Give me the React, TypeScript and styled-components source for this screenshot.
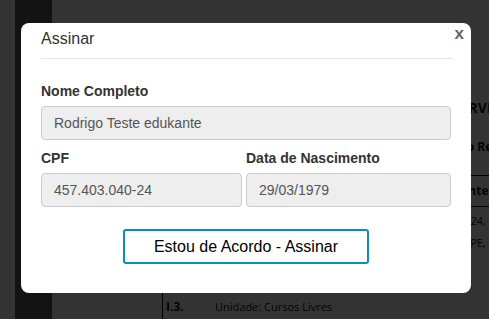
import styled, { createGlobalStyle } from "styled-components";

const GlobalStyle = createGlobalStyle`
  html, body {
    margin: 0;
    padding: 0;
    height: 100%;
    overflow: hidden;
  }
  body {
    background: #fff;
    font-family: "Liberation Sans", Arial, sans-serif;
  }
  #root {
    height: 100%;
  }
`;

// ---- document behind the dialog ----

const Page = styled.div`
  position: relative;
  display: flex;
  height: 100vh;
  background: #fff;
  overflow: hidden;
`;

const Gutter = styled.div`
  width: 15px;
  flex-shrink: 0;
`;

const SideBar = styled.div`
  width: 37px;
  flex-shrink: 0;
  background: #606060;
`;

const Sheet = styled.div`
  flex: 1;
  min-width: 0;
  padding: 98px 0 0 110px;
  font-family: "Open Sans", sans-serif;
  color: #111;
`;

const DocLine = styled.div<{ $indent: number; $bold?: boolean; $size?: number }>`
  padding-left: ${({ $indent }) => $indent}px;
  font-size: ${({ $size }) => $size ?? 11}px;
  font-weight: ${({ $bold }) => ($bold ? 700 : 400)};
  line-height: 20px;
  white-space: nowrap;
`;

const Spacer = styled.div<{ $h: number }>`
  height: ${({ $h }) => $h}px;
`;

const TableHead = styled.div`
  border-top: 1px solid #000;
  border-bottom: 1px solid #000;
  padding: 5px 0;
`;

const TableBody = styled.div`
  padding-top: 3px;
  & > div {
    line-height: 22px;
  }
`;

const Accent = styled.span`
  color: #e8a23a;
  font-weight: 700;
`;

const ItemRow = styled.div`
  display: flex;
  margin-top: 30px;
  padding: 13px 0 10px 3px;
  border-left: 1px solid #000;
  font-size: 11px;
  line-height: 20px;
`;

const ItemNum = styled.span`
  width: 49px;
  font-weight: 700;
  font-size: 12px;
`;

// ---- dialog ----

const Overlay = styled.div`
  position: absolute;
  inset: 0;
  background: rgba(0, 0, 0, 0.8);
`;

const Modal = styled.div`
  position: relative;
  width: 450px;
  margin: 23px 0 0 21px;
  padding-bottom: 29px;
  background: #fff;
  border-radius: 8px;
`;

const Header = styled.div`
  margin: 0 18px 0 20px;
  padding: 6px 0 9px;
  border-bottom: 1px solid #e5e5e5;
`;

const Title = styled.h4`
  margin: 0;
  font-size: 16px;
  font-weight: 400;
  line-height: 20px;
  color: #333;
`;

const Close = styled.button`
  position: absolute;
  top: 2px;
  right: 7px;
  padding: 0;
  border: 0;
  background: none;
  font-family: "Liberation Sans", Arial, sans-serif;
  font-size: 17px;
  font-weight: 700;
  line-height: 17px;
  color: #666;
  cursor: pointer;
`;

const Body = styled.div`
  padding: 22px 20px 0;
`;

const Field = styled.div<{ $gap?: number }>`
  margin-bottom: ${({ $gap }) => $gap ?? 0}px;
`;

const Label = styled.label`
  display: block;
  margin-bottom: 5px;
  font-size: 14px;
  font-weight: 700;
  line-height: 20px;
  color: #333;
`;

const Input = styled.input`
  display: block;
  width: 100%;
  height: 34px;
  box-sizing: border-box;
  padding: 6px 12px;
  font-family: "Liberation Sans", Arial, sans-serif;
  font-size: 14px;
  line-height: 20px;
  color: #555;
  background: #eee;
  border: 1px solid #ccc;
  border-radius: 4px;
  outline: none;
`;

const Row = styled.div`
  display: grid;
  grid-template-columns: 201px 205px;
  gap: 4px;
`;

const Footer = styled.div`
  display: flex;
  justify-content: center;
  margin-top: 22px;
`;

const SignButton = styled.button`
  width: 246px;
  height: 35px;
  padding: 0;
  background: #fff;
  border: 2px solid #0a8cbf;
  border-radius: 3px;
  font-family: "Liberation Sans", Arial, sans-serif;
  font-size: 16px;
  color: #000;
  cursor: pointer;
`;

export default function App() {
  return (
    <>
      <GlobalStyle />
      <Page>
        <Gutter />
        <SideBar />
        <Sheet>
          <DocLine $indent={291} $bold $size={14}>
            SERVIÇOS EDUCACIONAIS
          </DocLine>
          <Spacer $h={19} />
          <DocLine $indent={258} $bold $size={12}>
            Nome do Responsável
          </DocLine>
          <Spacer $h={18} />
          <TableHead>
            <DocLine $indent={253} $bold $size={12}>
              Contratante
            </DocLine>
          </TableHead>
          <TableBody>
            <DocLine $indent={222}>
              Rua das Flores, 124, <Accent>Boa Vista</Accent>
            </DocLine>
            <DocLine $indent={268}>Recife - PE, Brasil</DocLine>
          </TableBody>
          <ItemRow>
            <ItemNum>I.3.</ItemNum>
            <span>Unidade: Cursos Livres</span>
          </ItemRow>
        </Sheet>

        <Overlay>
          <Modal>
            <Header>
              <Title>Assinar</Title>
            </Header>
            <Close type="button">x</Close>
            <Body>
              <Field $gap={8}>
                <Label>Nome Completo</Label>
                <Input readOnly defaultValue="Rodrigo Teste edukante" />
              </Field>
              <Row>
                <Field>
                  <Label>CPF</Label>
                  <Input readOnly defaultValue="457.403.040-24" />
                </Field>
                <Field>
                  <Label>Data de Nascimento</Label>
                  <Input readOnly defaultValue="29/03/1979" />
                </Field>
              </Row>
              <Footer>
                <SignButton type="button">Estou de Acordo - Assinar</SignButton>
              </Footer>
            </Body>
          </Modal>
        </Overlay>
      </Page>
    </>
  );
}
